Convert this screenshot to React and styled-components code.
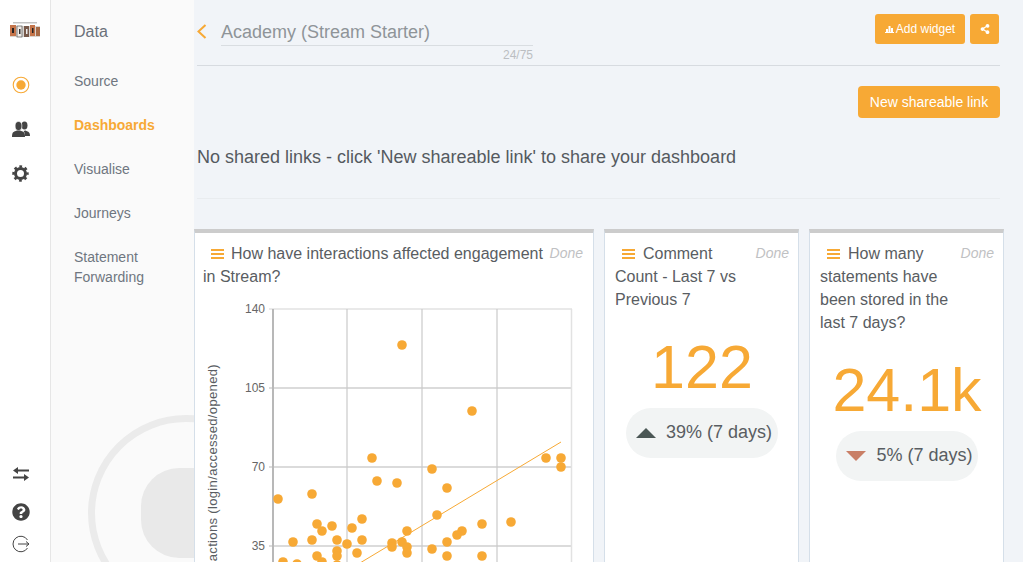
import React from "react";
import styled, { createGlobalStyle } from "styled-components";
import { FaQuestionCircle, FaShareAlt } from "react-icons/fa";

const ORANGE = "#f7a935";

const GlobalStyle = createGlobalStyle`
  html, body { margin: 0; padding: 0; height: 100%; overflow: hidden; }
  body { font-family: "Liberation Sans", Arial, sans-serif; background: #f1f4f8; }
  * { box-sizing: border-box; }
`;

const Page = styled.div`
  display: flex;
  width: 1023px;
  height: 562px;
  overflow: hidden;
`;
const Rail = styled.nav`
  flex: 0 0 51px;
  display: flex;
  flex-direction: column;
  align-items: center;
  padding: 20px 9px 8px 0;
  background: #fff;
  border-right: 1px solid #e6e6e6;
`;
const RailGroup = styled.div`
  display: flex;
  flex-direction: column;
  align-items: center;
  gap: ${(p) => p.$gap}px;
  margin-top: ${(p) => p.$top || 0}px;
`;
const RailSlot = styled.div`
  display: flex;
  align-items: center;
  justify-content: center;
  height: 20px;
  color: #444;
  margin-bottom: ${(p) => p.$after || 0}px;
`;
const Spacer = styled.div`
  flex: 1;
`;
const Sidebar = styled.aside`
  position: relative;
  flex: 0 0 143px;
  padding: 23px 0 0 23px;
  background: #fafafa;
  overflow: hidden;
`;
const Watermark = styled.svg`
  position: absolute;
  left: 37px;
  top: 415px;
`;
const SideTitle = styled.div`
  font-size: 16px;
  line-height: 18px;
  color: #6a7079;
  margin-bottom: 30px;
`;
const SideItem = styled.div`
  position: relative;
  font-size: 14px;
  line-height: 20px;
  margin-bottom: 24px;
  color: ${(p) => (p.$active ? ORANGE : "#6f7680")};
  font-weight: ${(p) => (p.$active ? 700 : 400)};
`;
const Main = styled.main`
  flex: 1;
  min-width: 0;
  padding: 0 23px 0 3px;
`;
const Header = styled.header`
  display: flex;
  align-items: flex-start;
  height: 66px;
  border-bottom: 1px solid #d7dbe0;
`;
const Back = styled.svg`
  margin: 24px 13px 0 0;
  flex: none;
`;
const TitleBlock = styled.div`
  width: 312px;
  padding-top: 19px;
`;
const Title = styled.div`
  font-size: 18px;
  line-height: 26px;
  color: #8f9498;
  border-bottom: 1px solid #d9dde1;
`;
const Counter = styled.div`
  font-size: 12px;
  line-height: 19px;
  color: #bbbec2;
  text-align: right;
`;
const Actions = styled.div`
  display: flex;
  gap: 5px;
  margin: 14px 1px 0 auto;
`;
const SmallButton = styled.button`
  display: flex;
  align-items: center;
  justify-content: center;
  gap: 2px;
  width: ${(p) => p.$width}px;
  height: 30px;
  padding: 0;
  border: 0;
  border-radius: 3px;
  background: ${ORANGE};
  color: #fff;
  font: 12px "Liberation Sans", Arial, sans-serif;
`;
const LinkRow = styled.div`
  display: flex;
  justify-content: flex-end;
  padding-top: 20px;
`;
const LinkButton = styled.button`
  width: 142px;
  height: 32px;
  padding: 0;
  border: 0;
  border-radius: 4px;
  background: ${ORANGE};
  color: #fff;
  font: 14px "Liberation Sans", Arial, sans-serif;
`;
const Empty = styled.div`
  height: 81px;
  padding-top: 28px;
  font-size: 18px;
  line-height: 22px;
  color: #555a60;
  border-bottom: 1px solid #e9ecef;
`;
const Cards = styled.div`
  display: grid;
  grid-template-columns: 400px 195px 195px;
  column-gap: 10px;
  margin: 30px 0 0 -3px;
`;
const Card = styled.section`
  height: 340px;
  padding: 9px ${(p) => (p.$narrow ? "9px 0 10px" : "10px 0 8px")};
  background: #fff;
  border-top: 4px solid #cccccc;
  border-left: 1px solid #d5dfe9;
  border-right: 1px solid #d5dfe9;
`;
const CardTitle = styled.div`
  font-size: 16px;
  line-height: 23px;
  color: #595d62;
  padding-right: ${(p) => (p.$narrow ? 30 : 0)}px;
`;
const Done = styled.span`
  float: right;
  font-size: 14px;
  font-style: italic;
  color: #bfc1c3;
  margin-right: ${(p) => (p.$narrow ? -30 : 0)}px;
`;
const Burger = styled.svg`
  margin: ${(p) => (p.$narrow ? "0 8px 0 7px" : "0 7px 0 8px")};
`;
const Metric = styled.div`
  margin-top: 19px;
  text-align: center;
  font-size: 61px;
  line-height: 74px;
  color: ${ORANGE};
`;
const Trend = styled.div`
  display: flex;
  align-items: center;
  justify-content: center;
  gap: 10px;
  width: ${(p) => p.$width}px;
  height: 50px;
  margin: 4px auto 0;
  padding: 0 0 2px ${(p) => p.$inset}px;
  border-radius: 25px;
  background: #f2f4f4;
  font-size: 18px;
  color: #595d62;
`;
const Arrow = styled.span`
  width: 0;
  height: 0;
  margin-top: 2px;
  border-left: 10px solid transparent;
  border-right: 10px solid transparent;
  border-bottom: ${(p) => (p.$down ? "0" : "10px solid #4b5755")};
  border-top: ${(p) => (p.$down ? "10px solid #c97f66" : "0")};
`;
const Chart = styled.svg`
  display: block;
  margin: 4px 0 0 -8px;
`;

const dots = [
  [278, 499], [312, 494], [372, 458], [377, 481], [397, 483], [317, 524], [322, 531],
  [332, 526], [352, 528], [362, 519], [312, 540], [337, 540], [362, 540], [293, 542],
  [347, 544], [392, 543], [392, 547], [402, 542], [317, 556], [337, 551], [337, 556],
  [357, 553], [283, 562], [297, 564], [322, 562], [337, 565], [402, 345], [472, 411],
  [546, 458], [561, 458], [561, 467], [432, 469], [447, 488], [437, 515], [482, 524],
  [511, 522], [462, 531], [457, 535], [407, 531], [447, 542], [407, 547], [407, 553],
  [432, 549], [447, 556], [482, 556],
];

// chart svg starts at page (195, 292)
const ScatterChart = () => (
  <Chart width="398" height="280" viewBox="195 292 398 280">
    {[309, 388, 467, 546].map((y) => (
      <line key={y} x1="269" x2="572" y1={y} y2={y} stroke={y === 309 ? "#e2e2e2" : "#cfcfcf"} strokeWidth="1.3" />
    ))}
    {[347, 422, 497].map((x) => (
      <line key={x} x1={x} x2={x} y1="309" y2="572" stroke="#cacaca" strokeWidth="1.2" />
    ))}
    <line x1="571.5" x2="571.5" y1="309" y2="572" stroke="#e2e2e2" strokeWidth="1.5" />
    <line x1="273" x2="273" y1="309" y2="572" stroke="#b8b8b8" strokeWidth="2" />
    {[[140, 313], [105, 392], [70, 471], [35, 550]].map(([t, y]) => (
      <text key={t} x="265" y={y} textAnchor="end" fontSize="12" fill="#666" fontFamily="Liberation Sans">{t}</text>
    ))}
    <text
      transform="translate(217 364) rotate(-90)"
      textAnchor="end"
      fontSize="13"
      letterSpacing="0.35"
      fill="#595d62"
      fontFamily="Liberation Sans"
    >
      interactions (login/accessed/opened)
    </text>
    <line x1="355" x2="561" y1="566" y2="442" stroke={ORANGE} strokeWidth="1" />
    {dots.map(([x, y], i) => (
      <circle key={i} cx={x} cy={y} r="4.8" fill={ORANGE} />
    ))}
  </Chart>
);

const Bars = ({ narrow }) => (
  <Burger $narrow={narrow} width="13" height="10" viewBox="0 0 13 10">
    <path d="M0 0h13v2H0zM0 4h13v2H0zM0 8h13v2H0z" fill={ORANGE} />
  </Burger>
);

const Logo = () => (
  <svg width="32" height="18" viewBox="0 0 32 18" style={{ marginLeft: 8, filter: "blur(0.5px)" }}>
    <path d="M4 1h24v1.500H4z" fill="#999" opacity=".6" />
    <rect x="1" y="5" width="30" height="11" fill="#d8d4d0" />
    <rect x="1" y="4" width="6" height="11" fill="#c4744a" />
    <rect x="8" y="5" width="5" height="11" fill="#f1ece7" stroke="#555" strokeWidth=".7" />
    <rect x="15" y="5" width="5" height="11" fill="#77594a" />
    <rect x="21" y="4" width="5" height="11" fill="#c4744a" />
    <rect x="27" y="6" width="4" height="9" fill="#a76a46" />
    <rect x="3" y="7" width="2" height="5" fill="#222" />
    <rect x="10" y="8" width="1.500" height="5" fill="#333" />
    <rect x="17" y="8" width="1.500" height="5" fill="#eee" />
    <rect x="23" y="7" width="1.500" height="5" fill="#222" />
  </svg>
);

const WidgetIcon = () => (
  <svg width="9" height="8" viewBox="0 0 9 8">
    <path d="M0 7h9v1H0zM1 4h2v3H1zM3.500 1h2v6h-2zM6 3h2v4H6z" fill="#fff" />
  </svg>
);

const UsersIcon = () => (
  <svg width="18" height="16" viewBox="0 0 18 16" fill="#444">
    <ellipse cx="12.500" cy="4.500" rx="3" ry="4" />
    <path d="M13 15h5c0-3-1-4-3-4.700l-1.500-.8-2 .6c1 1 1.500 2.900 1.500 4.900z" />
    <ellipse cx="6.500" cy="5" rx="3.400" ry="4.500" stroke="#fff" strokeWidth=".6" />
    <path d="M0 16c0-4 1-5 3-5.700L5 9.500h3l2 .8c2 .7 3 1.700 3 5.700z" />
  </svg>
);

const GearIcon = () => (
  <svg width="17" height="17" viewBox="0 0 17 17" fill="none" stroke="#444">
    <circle cx="8.500" cy="8.500" r="5" strokeWidth="3" />
    <circle cx="8.500" cy="8.500" r="7" strokeWidth="2.400" strokeDasharray="2.750 2.750" strokeDashoffset="1.400" />
  </svg>
);

const SwapIcon = () => (
  <svg width="16" height="14" viewBox="0 0 16 14" fill="#444">
    <path d="M5 0v2.500h11v2H5V7L0 3.500zM11 7v2.500H0v2h11V14l5-3.500z" />
  </svg>
);

export default function App() {
  return (
    <Page>
      <GlobalStyle />
      <Rail>
        <RailSlot><Logo /></RailSlot>
        <RailGroup $gap={24} $top={35}>
          <RailSlot>
            <svg width="18" height="18" viewBox="0 0 18 18">
              <circle cx="9" cy="9" r="7.800" fill="none" stroke={ORANGE} strokeWidth="1.100" />
              <circle cx="9" cy="9" r="4.700" fill={ORANGE} />
            </svg>
          </RailSlot>
          <RailSlot><UsersIcon /></RailSlot>
          <RailSlot><GearIcon /></RailSlot>
        </RailGroup>
        <Spacer />
        <RailGroup $gap={12}>
          <RailSlot $after={6}><SwapIcon /></RailSlot>
          <RailSlot><FaQuestionCircle size={18} /></RailSlot>
          <RailSlot>
            <svg width="18" height="18" viewBox="0 0 18 18" fill="none" stroke="#444" strokeWidth="1">
              <path d="M15.500 5A7.800 7.800 0 1 0 15.500 13" />
              <path d="M6 9h11M14 6.500L17 9l-3 2.500" />
            </svg>
          </RailSlot>
        </RailGroup>
      </Rail>
      <Sidebar>
        <Watermark width="110" height="150" viewBox="0 0 110 150">
          <circle cx="98" cy="98" r="94.500" fill="none" stroke="#ebebeb" strokeWidth="7" />
          <rect x="53" y="53" width="90" height="90" rx="38" fill="#e9e9e9" />
        </Watermark>
        <SideTitle>Data</SideTitle>
        <SideItem>Source</SideItem>
        <SideItem $active>Dashboards</SideItem>
        <SideItem>Visualise</SideItem>
        <SideItem>Journeys</SideItem>
        <SideItem>Statement<br />Forwarding</SideItem>
      </Sidebar>
      <Main>
        <Header>
          <Back width="11" height="15" viewBox="0 0 11 15">
            <path d="M8.500 1L1.500 7.500 8.500 14" fill="none" stroke={ORANGE} strokeWidth="2" />
          </Back>
          <TitleBlock>
            <Title>Academy (Stream Starter)</Title>
            <Counter>24/75</Counter>
          </TitleBlock>
          <Actions>
            <SmallButton $width={90}><WidgetIcon />Add widget</SmallButton>
            <SmallButton $width={29}><FaShareAlt size={10} /></SmallButton>
          </Actions>
        </Header>
        <LinkRow><LinkButton>New shareable link</LinkButton></LinkRow>
        <Empty>No shared links - click 'New shareable link' to share your dashboard</Empty>
        <Cards>
          <Card>
            <CardTitle>
              <Done>Done</Done>
              <Bars />How have interactions affected engagement in Stream?
            </CardTitle>
            <ScatterChart />
          </Card>
          <Card $narrow>
            <CardTitle $narrow>
              <Done $narrow>Done</Done>
              <Bars narrow />Comment Count - Last 7 vs Previous 7
            </CardTitle>
            <Metric>122</Metric>
            <Trend $width={152} $inset={4}><Arrow />39% (7 days)</Trend>
          </Card>
          <Card $narrow>
            <CardTitle $narrow>
              <Done $narrow>Done</Done>
              <Bars narrow />How many statements have been stored in the last 7 days?
            </CardTitle>
            <Metric>24.1k</Metric>
            <Trend $width={142} $inset={5}><Arrow $down />5% (7 days)</Trend>
          </Card>
        </Cards>
      </Main>
    </Page>
  );
}
